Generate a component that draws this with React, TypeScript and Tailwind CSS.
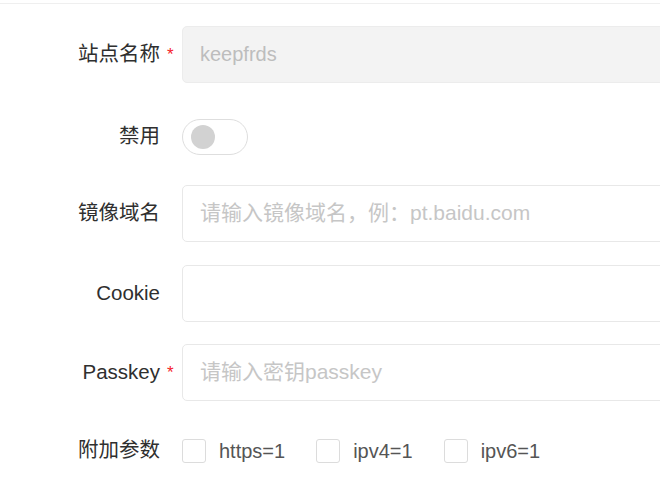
import { useState } from "react";

const font = { fontFamily: '"Liberation Sans", Arial, "Noto Sans CJK SC", sans-serif' };

function Label({ text, required }: { text: string; required?: boolean }) {
  return (
    <div className="flex shrink-0 items-center">
      <span className="w-[160px] text-right text-[20.5px] text-[#2f2f2f]">{text}</span>
      <span className="w-[22px] pl-[7px] text-[17px] leading-none text-[#f5222d]">{required ? "*" : ""}</span>
    </div>
  );
}

function TextInput({ placeholder, value, disabled }: { placeholder?: string; value?: string; disabled?: boolean }) {
  return (
    <input
      type="text"
      defaultValue={value}
      disabled={disabled}
      placeholder={placeholder}
      className={
        "h-[57px] w-[520px] shrink-0 rounded-[5px] border px-[17px] text-[20px] outline-none placeholder:text-[21px] placeholder:text-[#c6c6c6] " +
        (disabled ? "border-[#ececec] bg-[#f3f3f3] text-[#bdbdbd]" : "border-[#e8e8e8] bg-white text-[#333]")
      }
      style={font}
    />
  );
}

function Check({ label }: { label: string }) {
  const [on, setOn] = useState(false);
  return (
    <label className="flex cursor-pointer items-center gap-[13px]" onClick={() => setOn(!on)}>
      <span className={"h-[24px] w-[24px] rounded-[3px] border " + (on ? "border-[#409eff] bg-[#409eff]" : "border-[#dcdcdc] bg-white")} />
      <span className="text-[20px] text-[#555]">{label}</span>
    </label>
  );
}

export default function App() {
  const [disabled, setDisabled] = useState(false);

  return (
    <div className="h-[502px] w-[660px] overflow-hidden bg-white" style={font}>
      <div className="mt-[3px] h-px w-full bg-[#efefef]" />
      <form className="flex flex-col pt-[22px]">
        <div className="flex items-center">
          <Label text="站点名称" required />
          <TextInput value="keepfrds" disabled />
        </div>

        <div className="mt-[25px] flex h-[57px] items-center">
          <Label text="禁用" />
          <button
            type="button"
            onClick={() => setDisabled(!disabled)}
            className={
              "flex h-[36px] w-[66px] items-center rounded-full border px-[8px] " +
              (disabled ? "justify-end border-[#409eff] bg-[#409eff]" : "border-[#dedede] bg-white")
            }
          >
            <span className={"h-[24px] w-[24px] rounded-full " + (disabled ? "bg-white" : "bg-[#d2d2d2]")} />
          </button>
        </div>

        <div className="mt-[20px] flex items-center">
          <Label text="镜像域名" />
          <TextInput placeholder="请输入镜像域名，例：pt.baidu.com" />
        </div>

        <div className="mt-[23px] flex items-center">
          <Label text="Cookie" />
          <TextInput />
        </div>

        <div className="mt-[22px] flex items-center">
          <Label text="Passkey" required />
          <TextInput placeholder="请输入密钥passkey" />
        </div>

        <div className="mt-[21px] flex h-[57px] items-center">
          <Label text="附加参数" />
          <div className="flex items-center gap-[31px]">
            <Check label="https=1" />
            <Check label="ipv4=1" />
            <Check label="ipv6=1" />
          </div>
        </div>
      </form>
    </div>
  );
}
